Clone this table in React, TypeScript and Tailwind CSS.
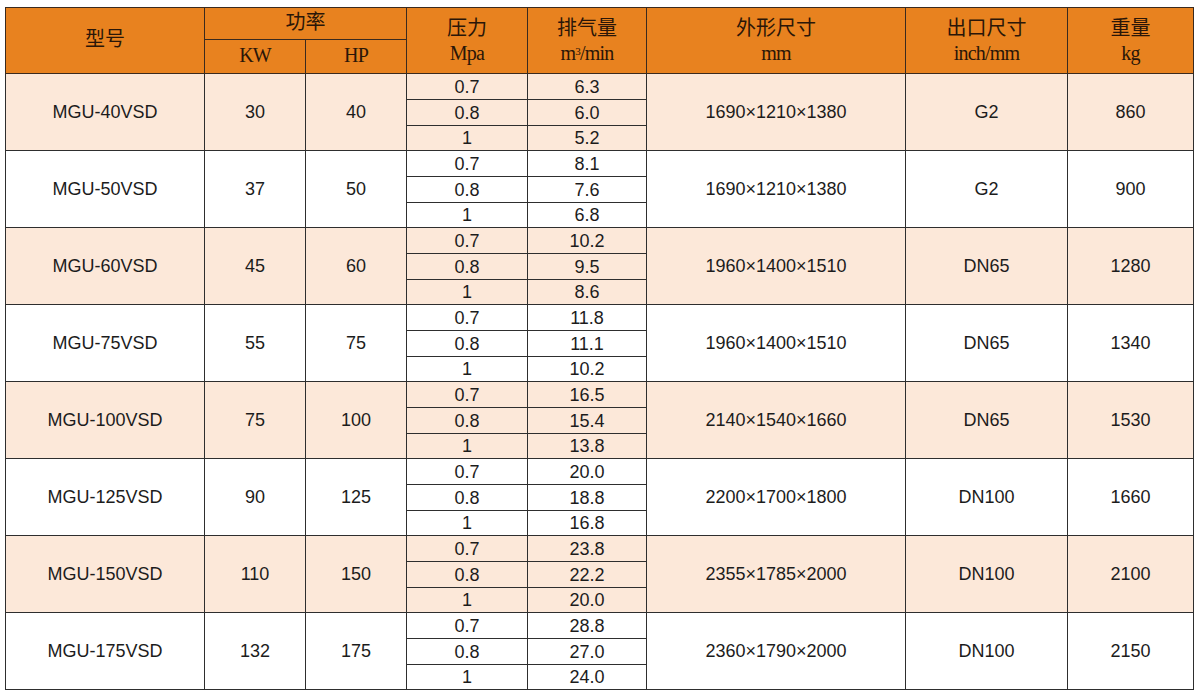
const rows = [
  { model: 'MGU-40VSD', kw: '30', hp: '40', flow: ['6.3', '6.0', '5.2'], size: '1690×1210×1380', outlet: 'G2', weight: '860' },
  { model: 'MGU-50VSD', kw: '37', hp: '50', flow: ['8.1', '7.6', '6.8'], size: '1690×1210×1380', outlet: 'G2', weight: '900' },
  { model: 'MGU-60VSD', kw: '45', hp: '60', flow: ['10.2', '9.5', '8.6'], size: '1960×1400×1510', outlet: 'DN65', weight: '1280' },
  { model: 'MGU-75VSD', kw: '55', hp: '75', flow: ['11.8', '11.1', '10.2'], size: '1960×1400×1510', outlet: 'DN65', weight: '1340' },
  { model: 'MGU-100VSD', kw: '75', hp: '100', flow: ['16.5', '15.4', '13.8'], size: '2140×1540×1660', outlet: 'DN65', weight: '1530' },
  { model: 'MGU-125VSD', kw: '90', hp: '125', flow: ['20.0', '18.8', '16.8'], size: '2200×1700×1800', outlet: 'DN100', weight: '1660' },
  { model: 'MGU-150VSD', kw: '110', hp: '150', flow: ['23.8', '22.2', '20.0'], size: '2355×1785×2000', outlet: 'DN100', weight: '2100' },
  { model: 'MGU-175VSD', kw: '132', hp: '175', flow: ['28.8', '27.0', '24.0'], size: '2360×1790×2000', outlet: 'DN100', weight: '2150' },
]

const pressures = ['0.7', '0.8', '1']
const subHeights = ['h-[26px]', 'h-[26px]', 'h-[25px]']

const hd = 'border border-[#3a2a1e] bg-[#e8821f] text-center align-middle font-normal text-[#2a1608]'
const cn = 'text-[20px] leading-[25px] [font-family:"Liberation_Serif","Noto_Sans_CJK_SC",serif]'
const en = 'text-[20px] leading-[24px] tracking-[-0.8px] [font-family:"Liberation_Serif",serif]'
const td = 'border border-[#2e2e2e] p-0 text-center align-middle leading-[20px]'

export default function App() {
  return (
    <div className="min-h-[694px] w-[1200px] bg-white pl-[5px] pt-[7px]">
      <table className="w-[1188px] table-fixed border-collapse text-[18px] text-[#1c1c1c] [font-family:'Liberation_Sans',Arial,sans-serif]">
        <colgroup>
          <col className="w-[199px]" />
          <col className="w-[101px]" />
          <col className="w-[101px]" />
          <col className="w-[121px]" />
          <col className="w-[119px]" />
          <col className="w-[259px]" />
          <col className="w-[162px]" />
          <col className="w-[126px]" />
        </colgroup>
        <thead>
          <tr className="h-[32px]">
            <th rowSpan={2} className={hd}>
              <span className={cn}>型号</span>
            </th>
            <th colSpan={2} className={hd}>
              <span className={cn}>功率</span>
            </th>
            <th rowSpan={2} className={hd}>
              <div className={cn}>压力</div>
              <div className={en}>Mpa</div>
            </th>
            <th rowSpan={2} className={hd}>
              <div className={cn}>排气量</div>
              <div className={en}>
                m<sup className="text-[11px]">3</sup>/min
              </div>
            </th>
            <th rowSpan={2} className={hd}>
              <div className={cn}>外形尺寸</div>
              <div className={en}>mm</div>
            </th>
            <th rowSpan={2} className={hd}>
              <div className={cn}>出口尺寸</div>
              <div className={en}>inch/mm</div>
            </th>
            <th rowSpan={2} className={hd}>
              <div className={cn}>重量</div>
              <div className={en}>kg</div>
            </th>
          </tr>
          <tr className="h-[34px] border-b border-b-[#a85a14]">
            <th className={hd}>
              <span className={en}>KW</span>
            </th>
            <th className={hd}>
              <span className={en}>HP</span>
            </th>
          </tr>
        </thead>
        <tbody>
          {rows.map((r, i) => {
            const bg = i % 2 === 0 ? 'bg-[#fce8d9]' : 'bg-white'
            return pressures.map((p, j) => (
              <tr key={r.model + p} className={`${subHeights[j]} ${bg}`}>
                {j === 0 && (
                  <>
                    <td rowSpan={3} className={td}>{r.model}</td>
                    <td rowSpan={3} className={td}>{r.kw}</td>
                    <td rowSpan={3} className={td}>{r.hp}</td>
                  </>
                )}
                <td className={td}>{p}</td>
                <td className={td}>{r.flow[j]}</td>
                {j === 0 && (
                  <>
                    <td rowSpan={3} className={td}>{r.size}</td>
                    <td rowSpan={3} className={td}>{r.outlet}</td>
                    <td rowSpan={3} className={td}>{r.weight}</td>
                  </>
                )}
              </tr>
            ))
          })}
        </tbody>
      </table>
    </div>
  )
}
